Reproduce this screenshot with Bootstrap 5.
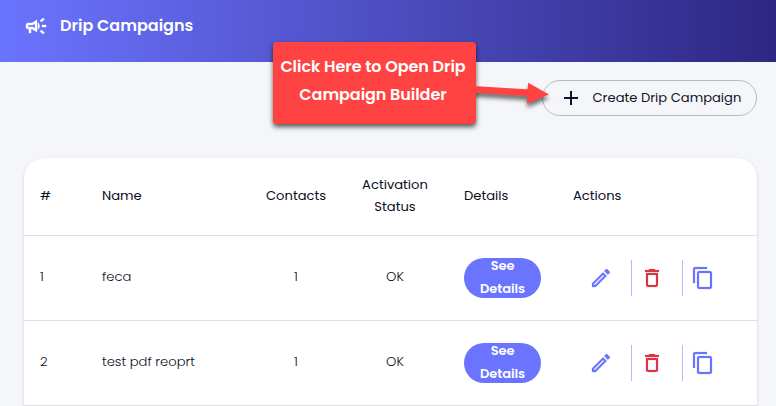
<!DOCTYPE html>
<html lang="en">
<head>
<meta charset="utf-8">
<meta name="viewport" content="width=device-width, initial-scale=1">
<title>Drip Campaigns</title>
<link href="https://cdn.jsdelivr.net/npm/bootstrap@5.3.0/dist/css/bootstrap.min.css" rel="stylesheet">
<style>
body{font-family:Poppins,Inter,sans-serif;background:#f5f6fa;color:#0b0d1c;font-size:13.12px;height:406px;overflow:hidden}
.topbar{height:62px;padding:0 24px 10px;background:linear-gradient(90deg,#6b74ff,#2e2782)}
.topbar h1{font-size:16px;font-weight:600;margin:0 0 0 12px}
svg{display:block;fill:currentColor}
.toolbar{padding:18px 19px 0 0}
.create-btn{width:215px;height:36px;border:1px solid #b9babf;font-size:13.12px;padding:0 0 0 15.5px;color:#111427}
.create-btn svg{margin-right:10px}
.panel{margin:42px 19px 0 24px;border-radius:20px 20px 0 0;box-shadow:0 1px 3px rgba(40,40,60,.18);height:248px}
.grid-table{table-layout:fixed;width:733px;margin:0;border-collapse:separate;border-spacing:0;--bs-table-bg:transparent;color:inherit}
.grid-table th,.grid-table td{padding:0 16px;vertical-align:middle;border-bottom:1px solid #dedfe1;line-height:22px;color:#0b0d1c}
.grid-table th{height:78px;font-weight:400;padding-bottom:1px}
.grid-table td{height:85px;font-weight:300;padding-bottom:2px}
.grid-table td.ops{padding-bottom:0}
.see-btn{width:77px;height:40px;border-radius:20px;background:#6b74ff;color:#fff;font-size:13px;font-weight:600;line-height:23px;letter-spacing:-.1px;padding:0 0 2px;position:relative;top:1px}
.see-btn:hover{background:#5a63ee;color:#fff}
.tool{height:36px;padding:0 18px 0 8px;border-right:1px solid #b5b9ff;color:#6b74ff;flex:none}
.tool svg{stroke:currentColor;stroke-width:.2}
.tool:first-child{padding-left:16px}
.tool:last-child{border:0;padding-right:0}
.tool.del{color:#dc3545}
.callout{left:273px;top:42px;width:203px;height:82px;border-radius:4px;background:#ff4343;box-shadow:0 3px 5px rgba(0,0,0,.65);font-size:16px;font-weight:600;line-height:28px;letter-spacing:-.06px;padding:0 3px 4px 0}
.pointer{left:470px;top:76px;filter:drop-shadow(0 4px 2px rgba(0,0,0,.55));clip-path:inset(0 0 0 6px)}
</style>
</head>
<body class="position-relative">
<svg class="d-none"><defs>
<path id="i-edit" d="M14.06 9.02l.92.92L5.92 19H5v-.92l9.06-9.06M17.66 3c-.25 0-.51.1-.7.29l-1.83 1.83 3.75 3.75 1.83-1.83c.39-.39.39-1.02 0-1.41l-2.34-2.34c-.2-.2-.45-.29-.71-.29zm-3.6 3.19L3 17.25V21h3.75L17.81 9.94l-3.75-3.75z"/>
<path id="i-del" d="M16 9v10H8V9h8m-1.500-6h-5l-1 1H5v2h14V4h-3.500l-1-1zM18 7H6v12c0 1.100.9 2 2 2h8c1.100 0 2-.9 2-2V7z"/>
<path id="i-copy" d="M16 1H4c-1.100 0-2 .9-2 2v14h2V3h12V1zm3 4H8c-1.100 0-2 .9-2 2v14c0 1.100.9 2 2 2h11c1.100 0 2-.9 2-2V7c0-1.100-.9-2-2-2zm0 16H8V7h11v14z"/>
</defs></svg>
<header class="topbar d-flex align-items-center text-white">
<svg width="24" height="24" viewBox="0 0 24 24" stroke="currentColor" stroke-width=".4"><path d="M18 11v2h4v-2zM16 17.610l3.200 2.390 1.200-1.600-3.200-2.400zM20.400 5.600L19.200 4 16 6.400 17.200 8zM4 9c-1.100 0-2 .9-2 2v2c0 1.100.9 2 2 2h1v4h2v-4h1l5 3V6L8 9H4zm5.030 1.710L11 9.530v4.940l-1.970-1.180-.48-.29H4v-2h4.550l.48-.29zM15.500 12c0-1.330-.58-2.530-1.500-3.350v6.690c.92-.81 1.500-2.010 1.500-3.340z"/></svg>
<h1>Drip Campaigns</h1>
</header>
<main>
<div class="toolbar d-flex justify-content-end">
<button class="create-btn btn rounded-pill d-flex align-items-center text-nowrap"><svg width="24" height="24" viewBox="0 0 24 24"><path d="M19 13h-6v6h-2v-6H5v-2h6V5h2v6h6v2z"/></svg>Create Drip Campaign</button>
</div>
<section class="panel bg-white">
<table class="table grid-table">
<colgroup><col style="width:62px"><col style="width:164px"><col style="width:92px"><col style="width:106px"><col style="width:109px"><col style="width:200px"></colgroup>
<thead><tr><th>#</th><th>Name</th><th class="text-center">Contacts</th><th class="text-center">Activation Status</th><th>Details</th><th>Actions</th></tr></thead>
<tbody>
<tr><td>1</td><td>feca</td><td class="text-center">1</td><td class="text-center">OK</td><td><a href="#" class="see-btn btn border-0 d-flex align-items-center justify-content-center">See<br>Details</a></td>
<td class="ops"><div class="d-flex"><span class="tool d-flex align-items-center"><svg width="24" height="24" viewBox="0 0 24 24"><use href="#i-edit"/></svg></span><span class="tool del d-flex align-items-center"><svg width="24" height="24" viewBox="0 0 24 24"><use href="#i-del"/></svg></span><span class="tool d-flex align-items-center"><svg width="24" height="24" viewBox="0 0 24 24"><use href="#i-copy"/></svg></span></div></td></tr>
<tr><td>2</td><td>test pdf reoprt</td><td class="text-center">1</td><td class="text-center">OK</td><td><a href="#" class="see-btn btn border-0 d-flex align-items-center justify-content-center">See<br>Details</a></td>
<td class="ops"><div class="d-flex"><span class="tool d-flex align-items-center"><svg width="24" height="24" viewBox="0 0 24 24"><use href="#i-edit"/></svg></span><span class="tool del d-flex align-items-center"><svg width="24" height="24" viewBox="0 0 24 24"><use href="#i-del"/></svg></span><span class="tool d-flex align-items-center"><svg width="24" height="24" viewBox="0 0 24 24"><use href="#i-copy"/></svg></span></div></td></tr>
</tbody></table>
</section>
</main>
<div class="callout position-absolute d-flex flex-column justify-content-center text-center text-white text-nowrap"><span>Click Here to Open Drip</span><span>Campaign Builder</span></div>
<svg class="pointer position-absolute" width="86" height="40" viewBox="470 76 86 40"><path fill="#ff4343" d="M470 85.800L527.500 89.300 528.300 82.800 549 94.500 527 103.500 527.300 96.200 470 92.500z"/></svg>
<script src="https://cdn.jsdelivr.net/npm/bootstrap@5.3.0/dist/js/bootstrap.bundle.min.js"></script>
</body>
</html>
